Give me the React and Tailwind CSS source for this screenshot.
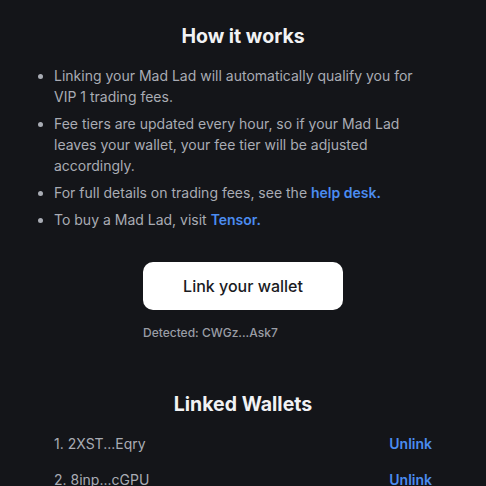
import { useState } from "react";

const wallets = ["2XST...Eqry", "8inp...cGPU"];

export default function App() {
  const [linked] = useState(wallets);

  return (
    <div className="w-full min-h-[486px] bg-[#141519] font-['Inter','Liberation_Sans',sans-serif] text-[#a9acb4]">
      <div className="px-[54px] pt-[22px] flex flex-col">
        <h2 className="text-center text-[19.5px] leading-[28px] font-bold text-[#f1f2f4]">How it works</h2>

        <ul className="mt-[15px] list-disc list-outside text-[14px] leading-[21px] marker:text-[#a9acb4] flex flex-col gap-[6px]">
          <li>Linking your Mad Lad will automatically qualify you for VIP 1 trading fees.</li>
          <li>Fee tiers are updated every hour, so if your Mad Lad leaves your wallet, your fee tier will be adjusted accordingly.</li>
          <li>
            For full details on trading fees, see the <a className="text-[#4b8cf0] font-semibold">help desk.</a>
          </li>
          <li>
            To buy a Mad Lad, visit <a className="text-[#4b8cf0] font-semibold">Tensor.</a>
          </li>
        </ul>

        <div className="mt-[32px] flex flex-col items-center">
          <div className="flex flex-col items-start">
            <button className="w-[200px] h-[48px] bg-white rounded-[10px] text-[#1a1b1f] text-[16px] font-medium">
              Link your wallet
            </button>
            <div className="mt-[15px] text-[12px] leading-[16px] text-[#9a9da5] font-medium">Detected: CWGz...Ask7</div>
          </div>
        </div>

        <h2 className="mt-[49px] text-center text-[19.5px] leading-[28px] font-bold text-[#f1f2f4]">Linked Wallets</h2>

        <div className="mt-[16px] flex flex-col gap-[16px] text-[14px] leading-[20px]">
          {linked.map((w, i) => (
            <div key={w} className="flex justify-between items-center">
              <span>{i + 1}. {w}</span>
              <span className="text-[#4b8cf0] font-semibold">Unlink</span>
            </div>
          ))}
        </div>
      </div>
    </div>
  );
}
